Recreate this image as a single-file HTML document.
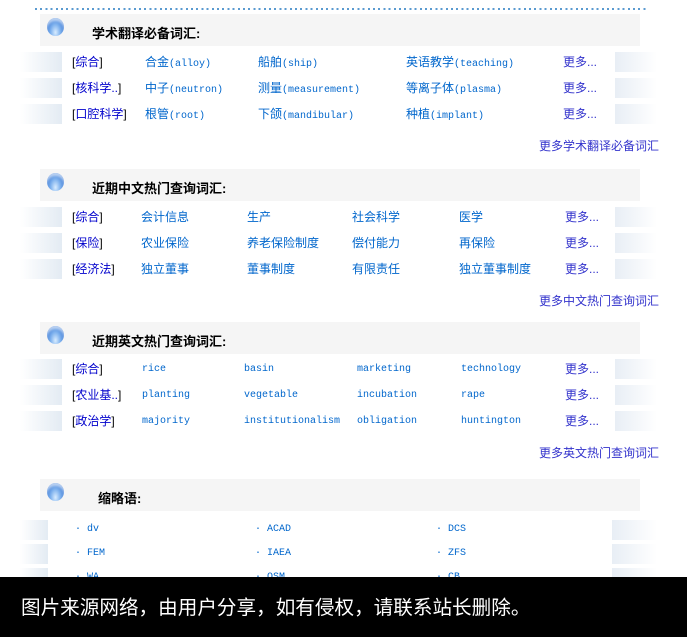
<!DOCTYPE html>
<html><head><meta charset="utf-8"><style>
body{margin:0;width:687px;height:637px;overflow:hidden;background:#fff;position:relative;font-family:"Liberation Sans","Noto Sans CJK SC",sans-serif;font-size:12px}
.a{position:absolute;white-space:nowrap;line-height:14px}
.hd{position:absolute;left:40px;width:600px;height:32px;background:#f5f5f5}
.hd b{position:absolute;top:9px;font-size:13px;color:#000}
.ball{position:absolute;left:7px;top:4px;width:17px;height:18px;border-radius:50%;background:radial-gradient(ellipse at 50% 80%,#d8ecff 0,#7fb2ee 40%,#3a78d4 80%);box-shadow:inset 0 3px 2px rgba(255,255,255,.6)}
.gl{position:absolute;left:20px;width:42px;height:20px;background:linear-gradient(to right,#fff,#e3ebf3)}
.gr{position:absolute;left:615px;width:42px;height:20px;background:linear-gradient(to right,#e8eef5,#fff)}
.l{color:#00c}.k{color:#000}.b{color:#0066cc}.m{font-family:"Liberation Mono",monospace;font-size:10px}.p{color:#3333cc}
</style></head><body>
<div style="position:absolute;left:35px;top:8px;width:612px;height:2px;background:repeating-linear-gradient(to right,#5a9ad0 0 2px,transparent 2px 5.2px)"></div>

<div class="hd" style="top:14px"><div class="ball"></div><b style="left:52px">学术翻译必备词汇:</b></div>
<div class="gl" style="top:52px"></div><div class="gr" style="top:52px"></div>
<div class="gl" style="top:78px"></div><div class="gr" style="top:78px"></div>
<div class="gl" style="top:104px"></div><div class="gr" style="top:104px"></div>
<div class="a" style="left:72px;top:55px"><span class="k">[</span><span class="l">综合</span><span class="k">]</span></div>
<div class="a b" style="left:145px;top:55px">合金<span class="m">(alloy)</span></div>
<div class="a b" style="left:258px;top:55px">船舶<span class="m">(ship)</span></div>
<div class="a b" style="left:406px;top:55px">英语教学<span class="m">(teaching)</span></div>
<div class="a p" style="left:563px;top:55px">更多...</div>
<div class="a" style="left:72px;top:81px"><span class="k">[</span><span class="l">核科学..</span><span class="k">]</span></div>
<div class="a b" style="left:145px;top:81px">中子<span class="m">(neutron)</span></div>
<div class="a b" style="left:258px;top:81px">测量<span class="m">(measurement)</span></div>
<div class="a b" style="left:406px;top:81px">等离子体<span class="m">(plasma)</span></div>
<div class="a p" style="left:563px;top:81px">更多...</div>
<div class="a" style="left:72px;top:107px"><span class="k">[</span><span class="l">口腔科学</span><span class="k">]</span></div>
<div class="a b" style="left:145px;top:107px">根管<span class="m">(root)</span></div>
<div class="a b" style="left:258px;top:107px">下颌<span class="m">(mandibular)</span></div>
<div class="a b" style="left:406px;top:107px">种植<span class="m">(implant)</span></div>
<div class="a p" style="left:563px;top:107px">更多...</div>
<div class="a p" style="left:539px;top:139px">更多学术翻译必备词汇</div>

<div class="hd" style="top:169px"><div class="ball"></div><b style="left:52px">近期中文热门查询词汇:</b></div>
<div class="gl" style="top:207px"></div><div class="gr" style="top:207px"></div>
<div class="gl" style="top:233px"></div><div class="gr" style="top:233px"></div>
<div class="gl" style="top:259px"></div><div class="gr" style="top:259px"></div>
<div class="a" style="left:72px;top:210px"><span class="k">[</span><span class="l">综合</span><span class="k">]</span></div>
<div class="a b" style="left:141px;top:210px">会计信息</div><div class="a b" style="left:247px;top:210px">生产</div><div class="a b" style="left:352px;top:210px">社会科学</div><div class="a b" style="left:459px;top:210px">医学</div><div class="a p" style="left:565px;top:210px">更多...</div>
<div class="a" style="left:72px;top:236px"><span class="k">[</span><span class="l">保险</span><span class="k">]</span></div>
<div class="a b" style="left:141px;top:236px">农业保险</div><div class="a b" style="left:247px;top:236px">养老保险制度</div><div class="a b" style="left:352px;top:236px">偿付能力</div><div class="a b" style="left:459px;top:236px">再保险</div><div class="a p" style="left:565px;top:236px">更多...</div>
<div class="a" style="left:72px;top:262px"><span class="k">[</span><span class="l">经济法</span><span class="k">]</span></div>
<div class="a b" style="left:141px;top:262px">独立董事</div><div class="a b" style="left:247px;top:262px">董事制度</div><div class="a b" style="left:352px;top:262px">有限责任</div><div class="a b" style="left:459px;top:262px">独立董事制度</div><div class="a p" style="left:565px;top:262px">更多...</div>
<div class="a p" style="left:539px;top:294px">更多中文热门查询词汇</div>

<div class="hd" style="top:322px"><div class="ball"></div><b style="left:52px">近期英文热门查询词汇:</b></div>
<div class="gl" style="top:359px"></div><div class="gr" style="top:359px"></div>
<div class="gl" style="top:385px"></div><div class="gr" style="top:385px"></div>
<div class="gl" style="top:411px"></div><div class="gr" style="top:411px"></div>
<div class="a" style="left:72px;top:362px"><span class="k">[</span><span class="l">综合</span><span class="k">]</span></div>
<div class="a b m" style="left:142px;top:363px">rice</div><div class="a b m" style="left:244px;top:363px">basin</div><div class="a b m" style="left:357px;top:363px">marketing</div><div class="a b m" style="left:461px;top:363px">technology</div><div class="a p" style="left:565px;top:362px">更多...</div>
<div class="a" style="left:72px;top:388px"><span class="k">[</span><span class="l">农业基..</span><span class="k">]</span></div>
<div class="a b m" style="left:142px;top:389px">planting</div><div class="a b m" style="left:244px;top:389px">vegetable</div><div class="a b m" style="left:357px;top:389px">incubation</div><div class="a b m" style="left:461px;top:389px">rape</div><div class="a p" style="left:565px;top:388px">更多...</div>
<div class="a" style="left:72px;top:414px"><span class="k">[</span><span class="l">政治学</span><span class="k">]</span></div>
<div class="a b m" style="left:142px;top:415px">majority</div><div class="a b m" style="left:244px;top:415px">institutionalism</div><div class="a b m" style="left:357px;top:415px">obligation</div><div class="a b m" style="left:461px;top:415px">huntington</div><div class="a p" style="left:565px;top:414px">更多...</div>
<div class="a p" style="left:539px;top:446px">更多英文热门查询词汇</div>

<div class="hd" style="top:479px"><div class="ball"></div><b style="left:58px">缩略语:</b></div>
<div class="gl" style="top:520px;width:28px"></div><div class="gr" style="top:520px;left:612px;width:45px"></div>
<div class="gl" style="top:544px;width:28px"></div><div class="gr" style="top:544px;left:612px;width:45px"></div>
<div class="gl" style="top:568px;width:28px"></div><div class="gr" style="top:568px;left:612px;width:45px"></div>
<div class="a b m" style="left:75px;top:523px">· dv</div><div class="a b m" style="left:255px;top:523px">· ACAD</div><div class="a b m" style="left:436px;top:523px">· DCS</div>
<div class="a b m" style="left:75px;top:547px">· FEM</div><div class="a b m" style="left:255px;top:547px">· IAEA</div><div class="a b m" style="left:436px;top:547px">· ZFS</div>
<div class="a b m" style="left:75px;top:571px">· WA</div><div class="a b m" style="left:255px;top:571px">· OSM</div><div class="a b m" style="left:436px;top:571px">· CB</div>

<div style="position:absolute;left:0;top:577px;width:687px;height:60px;background:#000"></div>
<div class="a" style="left:21px;top:596px;color:#fff;font-size:19.6px;line-height:24px">图片来源网络，由用户分享，如有侵权，请联系站长删除。</div>
</body></html>
